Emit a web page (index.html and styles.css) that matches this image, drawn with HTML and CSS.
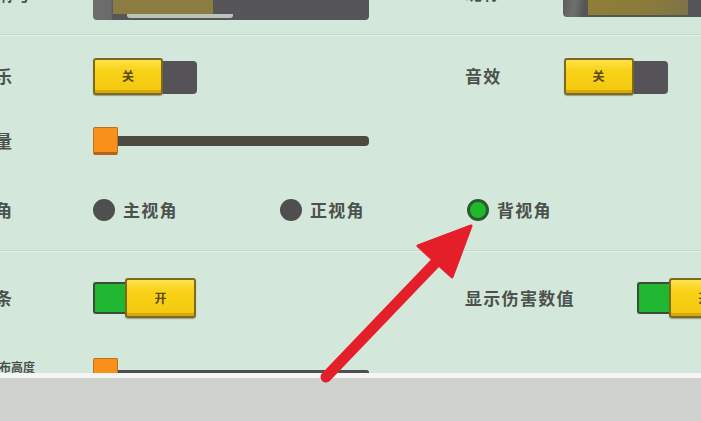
FILE: index.html
```html
<!DOCTYPE html>
<html lang="zh">
<head>
<meta charset="utf-8">
<title>设置</title>
<link rel="stylesheet" href="styles.css">
</head>
<body>
<div class="screen">
  <div class="panel">
    <div class="row row-top">
      <div class="cell left">
        <span class="label label-small">称号</span>
        <div class="bar bar-left">
          <span class="bar-fill"></span>
          <span class="bar-sliver"></span>
        </div>
      </div>
      <div class="cell right">
        <span class="label label-top">昵称</span>
        <div class="bar bar-right"><span class="bar-fill2"></span></div>
      </div>
    </div>
    <div class="divider"></div>
    <div class="row row-1">
      <div class="cell left">
        <span class="label">音乐</span>
        <div class="toggle off"><span class="knob">关</span><span class="track"></span></div>
      </div>
      <div class="cell right">
        <span class="label">音效</span>
        <div class="toggle off"><span class="knob">关</span><span class="track"></span></div>
      </div>
    </div>
    <div class="row row-2">
      <div class="cell left">
        <span class="label">音量</span>
        <div class="slider"><span class="thumb"></span><span class="rail"></span></div>
      </div>
    </div>
    <div class="row row-3">
      <div class="cell left wide">
        <span class="label">视角</span>
        <div class="radios">
          <div class="radio"><span class="dot"></span><span class="radio-text">主视角</span></div>
          <div class="radio"><span class="dot"></span><span class="radio-text">正视角</span></div>
          <div class="radio"><span class="dot checked"></span><span class="radio-text">背视角</span></div>
        </div>
      </div>
    </div>
    <div class="divider"></div>
    <div class="row row-4">
      <div class="cell left">
        <span class="label">显示血条</span>
        <div class="toggle on"><span class="track green"></span><span class="knob">开</span></div>
      </div>
      <div class="cell right">
        <span class="label">显示伤害数值</span>
        <div class="toggle on"><span class="track green"></span><span class="knob">开</span></div>
      </div>
    </div>
    <div class="row row-5">
      <div class="cell left">
        <span class="label label-tiny">分布高度</span>
        <div class="slider"><span class="thumb"></span><span class="rail thin"></span></div>
      </div>
    </div>
  </div>
  <div class="footer"></div>
  <svg class="arrow" width="701" height="421" viewBox="0 0 701 421">
    <line x1="326" y1="377" x2="440" y2="258" stroke="#e51f2a" stroke-width="11" stroke-linecap="round"/>
    <polygon points="471,226 418,246 452,277" fill="#e51f2a" stroke="#e51f2a" stroke-width="3" stroke-linejoin="round"/>
  </svg>
</div>
</body>
</html>
```

FILE: styles.css
```css
* { box-sizing: border-box; }
html, body { margin: 0; padding: 0; }
body {
  width: 701px;
  height: 421px;
  overflow: hidden;
  font-family: "Noto Sans CJK SC", "Noto Sans", sans-serif;
  font-weight: 700;
  color: #4c514d;
}
.screen {
  position: relative;
  width: 701px;
  height: 421px;
  overflow: hidden;
  background: #cfd2cd;
}
.panel {
  height: 373px;
  overflow: hidden;
  background: #d3e7da;
  display: flex;
  flex-direction: column;
}
.footer {
  height: 48px;
  border-top: 5px solid #f3f6f4;
  background: #cfd2cd;
}
.row {
  display: grid;
  grid-template-columns: 465px 236px;
  flex: none;
}
.cell { display: flex; align-items: center; }
.cell.wide { grid-column: 1 / 3; }
.label {
  font-size: 17px;
  line-height: 22px;
  letter-spacing: 1.3px;
  white-space: nowrap;
}
.cell.left > .label {
  width: 80px;
  margin-left: -68px;
  margin-right: 81px;
  text-align: right;
  letter-spacing: 0;
}
.cell.right { gap: 62px; }

/* top row */
.row-top { height: 20px; }
.row-top .cell { align-items: flex-start; }
.cell.left > .label-small {
  font-size: 15px;
  margin-top: -16px;
  margin-left: -50px;
  margin-right: 63px;
}
.label-top { margin-top: -18px; width: 36px; }
.bar {
  display: flex;
  height: 20px;
  background: #565658;
}
.bar-left {
  width: 276px;
  flex-direction: column;
  align-items: flex-start;
  padding-left: 20px;
  border-radius: 0 0 4px 4px;
  background: linear-gradient(90deg, #6c6d6c 0, #6a6b6a 18px, #565658 20px);
}
.bar-fill { width: 100px; height: 14px; background: #8b7c42; }
.bar-sliver {
  width: 106px;
  height: 4px;
  margin-left: 14px;
  background: #b9c4bd;
  border-radius: 0 0 3px 3px;
}
.bar-right {
  width: 150px;
  height: 17px;
  padding-left: 25px;
  border-radius: 0 0 0 4px;
  background: linear-gradient(100deg, #5d5e5c 0, #6f706d 12px, #565658 22px);
}
.bar-fill2 {
  width: 100px;
  height: 15px;
  background: linear-gradient(90deg, #8e7e38 0, #8b7c3a 50%, #867840 75%, #7f7347 100%);
}

.divider {
  flex: none;
  height: 2px;
  border-top: 1px solid #c4d8cc;
  border-bottom: 1px solid #e2efe8;
}
.row-top + .divider { margin-top: 14px; }

/* toggles */
.row-1 { height: 80px; }
.toggle { display: flex; align-items: center; flex: none; }
.knob {
  display: flex;
  align-items: center;
  justify-content: center;
  width: 70px;
  height: 37px;
  background: linear-gradient(180deg, #ffe34a 0, #f9d21a 30%, #f2c80c 100%);
  border: 2px solid #7a6a22;
  border-radius: 3px;
  box-shadow: inset 0 -3px 0 #d9a908, 0 1px 1px rgba(60, 50, 20, 0.4);
  font-size: 12px;
  line-height: 1;
  color: #5a4a14;
  position: relative;
  z-index: 1;
}
.track {
  width: 34px;
  height: 33px;
  background: #555358;
  border-radius: 0 4px 4px 0;
  margin-top: 2px;
}
.toggle.on .knob { width: 71px; height: 40px; }
.track.green {
  width: 32px;
  height: 32px;
  margin-top: 0;
  background: #20b733;
  border: 2px solid #3e4a3c;
  border-right: none;
  border-radius: 3px 0 0 3px;
}

/* sliders */
.row-2 { height: 50px; }
.slider { display: flex; align-items: center; flex: none; }
.thumb {
  width: 25px;
  height: 28px;
  background: #f8901a;
  border: 1px solid #b9721f;
  border-bottom: 3px solid #b4651a;
  border-radius: 2px;
}
.rail {
  width: 251px;
  height: 10px;
  background: #4e4a41;
  border-radius: 0 4px 4px 0;
}
.rail.thin { height: 5px; margin-top: 0; background: #4f4f4f; }

/* radios */
.row-3 { height: 84px; padding-top: 33px; }
.row-3 .cell { height: 22px; }
.radios { display: flex; }
.radio {
  width: 187px;
  display: flex;
  align-items: center;
  gap: 8px;
}
.dot {
  width: 22px;
  height: 22px;
  border-radius: 50%;
  background: #4e4f4e;
  flex: none;
}
.dot.checked {
  background: #1fb82b;
  border: 3px solid #2d5a2c;
}
.radio-text {
  font-size: 17px;
  line-height: 22px;
  letter-spacing: 1.3px;
}

.row-4 { height: 92px; }
.row-5 { height: 56px; }
.cell.left > .label-tiny {
  font-size: 12px;
  letter-spacing: 0;
  margin-left: -45px;
  margin-right: 58px;
  margin-top: -10px;
  line-height: 14px;
}

.arrow {
  position: absolute;
  left: 0;
  top: 0;
  pointer-events: none;
}
```
